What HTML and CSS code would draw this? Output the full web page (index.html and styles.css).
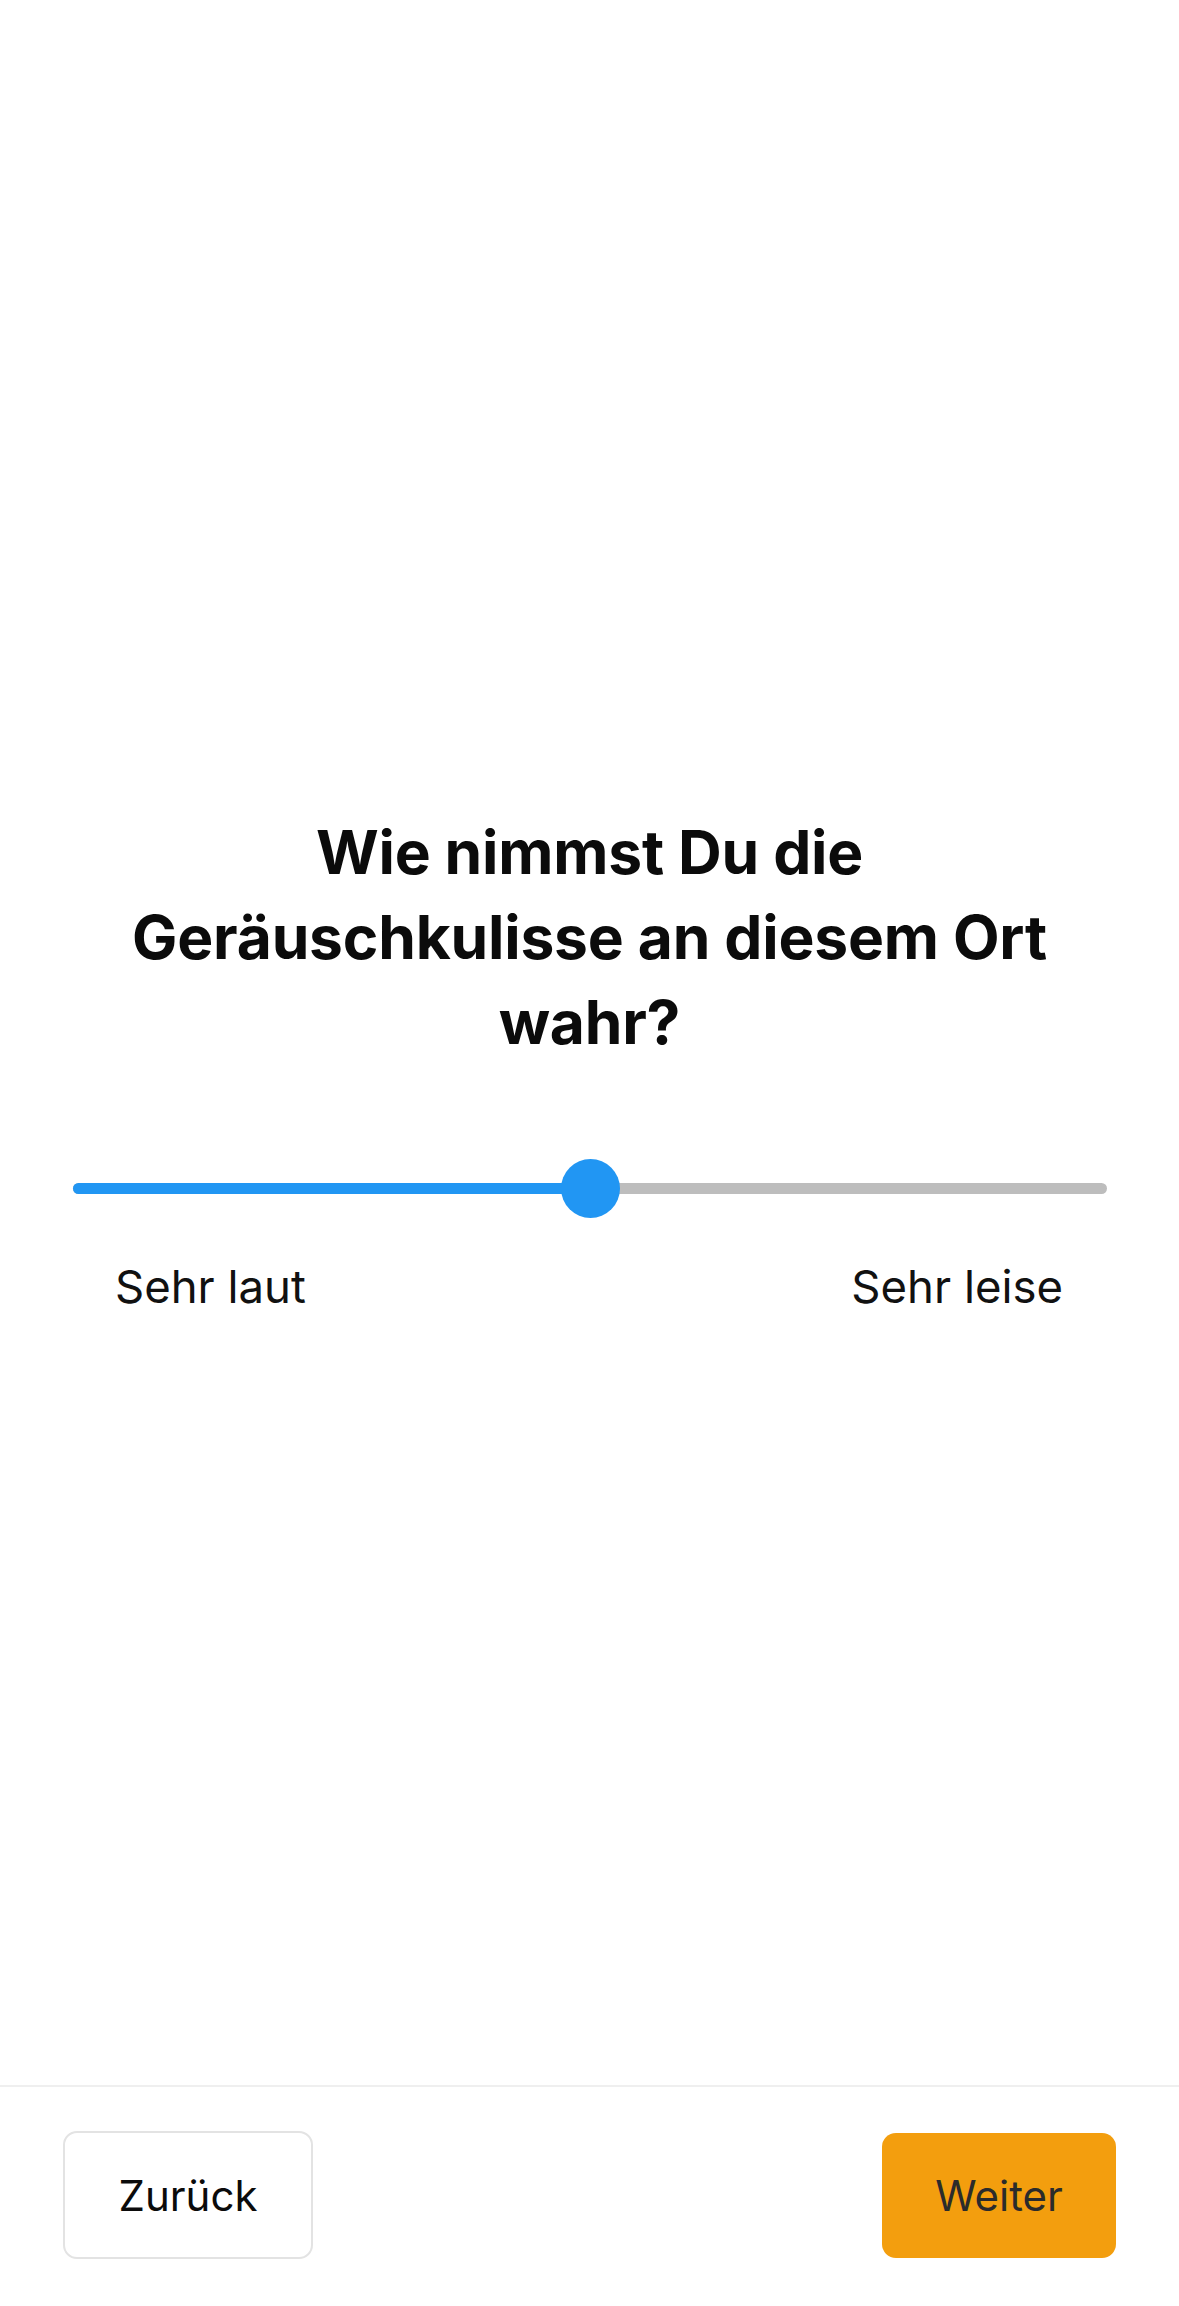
FILE: index.html
```html
<!DOCTYPE html>
<html lang="de">
<head>
<meta charset="utf-8">
<title>Geräuschkulisse</title>
<link rel="stylesheet" href="styles.css">
</head>
<body>
<div class="page">
  <main class="main">
    <h1 class="question">Wie nimmst Du die Geräuschkulisse an diesem Ort wahr?</h1>
    <div class="slider">
      <div class="track">
        <div class="fill" style="width: 50%"></div>
        <div class="thumb" style="left: 50%"></div>
      </div>
    </div>
    <div class="labels">
      <span class="label">Sehr laut</span>
      <span class="label">Sehr leise</span>
    </div>
  </main>
  <footer class="footer">
    <button class="btn btn-back">Zurück</button>
    <button class="btn btn-next">Weiter</button>
  </footer>
</div>
</body>
</html>
```
FILE: styles.css
```css
* { box-sizing: border-box; }
html, body { margin: 0; padding: 0; background: #fff; }
body {
  font-family: Inter, "Noto Sans", "Liberation Sans", sans-serif;
  color: #0d0d0d;
}
.page {
  width: 1179px;
  height: 2306px;
  display: flex;
  flex-direction: column;
}
.main {
  height: 2085px;
  padding-top: 810px;
  display: flex;
  flex-direction: column;
}
.question {
  margin: 0;
  padding: 0 70px;
  font-size: 60.5px;
  line-height: 85px;
  font-weight: 700;
  text-align: center;
  color: #0b0b0b;
  letter-spacing: -0.2px;
}
.slider {
  margin: 94px 72px 0 73px;
  height: 59px;
  display: flex;
  align-items: center;
}
.track {
  position: relative;
  width: 100%;
  height: 11px;
  border-radius: 6px;
  background: #bdbdbd;
}
.fill {
  height: 100%;
  border-radius: 6px 0 0 6px;
  background: #2196f3;
}
.thumb {
  position: absolute;
  top: 50%;
  width: 59px;
  height: 59px;
  margin: -29.5px 0 0 -29.5px;
  border-radius: 50%;
  background: #2196f3;
}
.labels {
  margin: 42px 116px 0 115px;
  display: flex;
  justify-content: space-between;
}
.label {
  font-size: 45.5px;
  line-height: 53px;
  color: #111;
}
.footer {
  flex: 1;
  border-top: 2px solid #efefef;
  padding: 44px 63px 0 63px;
  display: flex;
  justify-content: space-between;
  align-items: flex-start;
}
.btn {
  font-family: Inter, "Noto Sans", "Liberation Sans", sans-serif;
  font-size: 42px;
  border-radius: 14px;
  cursor: pointer;
  padding: 0;
}
.btn-back {
  width: 250px;
  height: 128px;
  background: #fff;
  border: 2px solid #e3e3e3;
  color: #0b0b0b;
}
.btn-next {
  margin-top: 2px;
  width: 234px;
  height: 125px;
  background: #f39e0e;
  border: none;
  color: #2b2b2b;
}
```
